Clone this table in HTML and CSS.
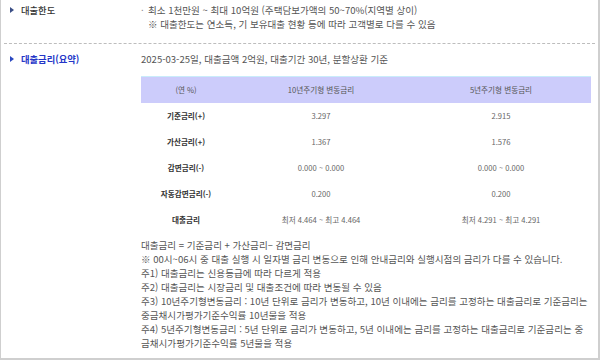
FILE: index.html
```html
<!DOCTYPE html>
<html lang="ko">
<head>
<meta charset="utf-8">
<link rel="stylesheet" href="styles.css">
</head>
<body>
<div class="box">
  <div class="row row-first">
    <div class="label"><span class="arrow"></span>대출한도</div>
    <div class="content">
      <p class="bullet"><span class="dot">·</span>최소 1천만원 ~ 최대 10억원 (주택담보가액의 50~70%(지역별 상이)</p>
      <p class="indent">※ 대출한도는 연소득, 기 보유대출 현황 등에 따라 고객별로 다를 수 있음</p>
    </div>
  </div>
  <div class="row row-second">
    <div class="label label-blue"><span class="arrow arrow-blue"></span>대출금리(요약)</div>
    <div class="content">
      <p>2025-03-25일, 대출금액 2억원, 대출기간 30년, 분할상환 기준</p>
      <table class="rates">
        <colgroup><col class="c1"><col class="c2"><col class="c3"></colgroup>
        <thead>
          <tr><th>(연 %)</th><th>10년주기형 변동금리</th><th>5년주기형 변동금리</th></tr>
        </thead>
        <tbody>
          <tr><td class="name">기준금리(+)</td><td>3.297</td><td>2.915</td></tr>
          <tr><td class="name">가산금리(+)</td><td>1.367</td><td>1.576</td></tr>
          <tr><td class="name">감면금리(-)</td><td>0.000 ~ 0.000</td><td>0.000 ~ 0.000</td></tr>
          <tr><td class="name">자동감면금리(-)</td><td>0.200</td><td>0.200</td></tr>
          <tr><td class="name">대출금리</td><td>최저 4.464 ~ 최고 4.464</td><td>최저 4.291 ~ 최고 4.291</td></tr>
        </tbody>
      </table>
      <div class="notes">
        <p>대출금리 = 기준금리 + 가산금리– 감면금리</p>
        <p>※ 00시~06시 중 대출 실행 시 일자별 금리 변동으로 인해 안내금리와 실행시점의 금리가 다를 수 있습니다.</p>
        <p>주1) 대출금리는 신용등급에 따라 다르게 적용</p>
        <p>주2) 대출금리는 시장금리 및 대출조건에 따라 변동될 수 있음</p>
        <p>주3) 10년주기형변동금리 : 10년 단위로 금리가 변동하고, 10년 이내에는 금리를 고정하는 대출금리로 기준금리는 중금채시가평가기준수익률 10년물을 적용</p>
        <p>주4) 5년주기형변동금리 : 5년 단위로 금리가 변동하고, 5년 이내에는 금리를 고정하는 대출금리로 기준금리는 중금채시가평가기준수익률 5년물을 적용</p>
      </div>
    </div>
  </div>
</div>
</body>
</html>
```

FILE: styles.css
```css
html, body {
  margin: 0;
  padding: 0;
  background: #fff;
}
body {
  font-family: "Noto Sans CJK KR", "Noto Sans", sans-serif;
  font-size: 9.55px;
  line-height: 14px;
  color: #555;
}
p { margin: 0; }
.box {
  width: 600px;
  height: 360px;
  box-sizing: border-box;
  border: 1px solid #cfcfcf;
  border-top: none;
  border-right-width: 2px;
  border-bottom-width: 2px;
  overflow: hidden;
}
.row {
  display: flex;
  margin: 0 3px;
}
.row-first {
  padding: 3px 0 12px;
  border-bottom: 1px dashed #bdbdbd;
}
.row-second {
  padding-top: 8px;
}
.label {
  width: 137px;
  flex: none;
  display: flex;
  align-items: flex-start;
  color: #333;
  font-weight: 500;
  font-size: 9.3px;
  padding-left: 6px;
  box-sizing: border-box;
}
.label-blue {
  color: #2536c8;
  font-weight: 700;
}
.arrow {
  width: 0;
  height: 0;
  border-left: 4px solid #3c4f86;
  border-top: 3px solid transparent;
  border-bottom: 3px solid transparent;
  margin: 4px 7px 0 0;
}
.arrow-blue {
  border-left-color: #2a48c0;
}
.content {
  flex: 1;
  min-width: 0;
  padding-right: 4px;
}
.bullet {
  display: flex;
}
.dot {
  width: 7px;
  color: #777;
}
.indent {
  padding-left: 7px;
}
.rates {
  width: 450px;
  border-collapse: collapse;
  table-layout: fixed;
  margin-top: 10px;
  font-size: 7.6px;
  line-height: 10px;
  text-align: center;
}
.rates .c1 { width: 90px; }
.rates .c2 { width: 180px; }
.rates .c3 { width: 180px; }
.rates th {
  background: #ccccfb;
  border-top: 1px solid #c9ecfa;
  height: 26px;
  padding: 0;
  font-weight: 400;
  color: #555;
}
.rates td {
  height: 26px;
  padding: 0;
  color: #666;
}
.rates td.name {
  color: #333;
  font-weight: 700;
}
.notes {
  margin-top: 5px;
}
```
